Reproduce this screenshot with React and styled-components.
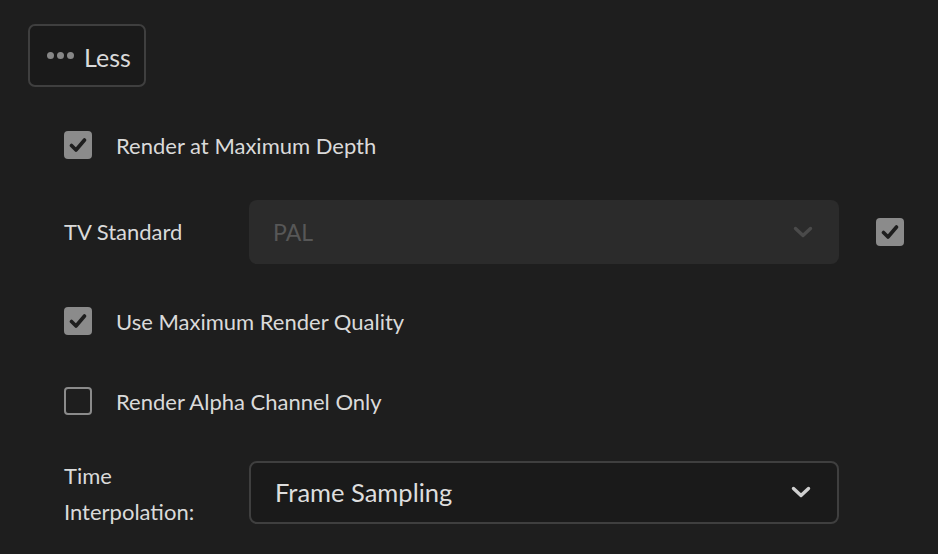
import React from "react";
import styled, { createGlobalStyle } from "styled-components";

const Global = createGlobalStyle`
  html, body { margin: 0; padding: 0; background: #1e1e1e; }
  body { font-family: "Lato", "Liberation Sans", sans-serif; color: #d8d8d8; }
`;

const Page = styled.div`
  width: 938px;
  height: 554px;
  box-sizing: border-box;
  padding: 24px 0 0 28px;
  background: #1e1e1e;
  overflow: hidden;
`;

const LessButton = styled.button`
  display: flex;
  align-items: center;
  gap: 10px;
  box-sizing: border-box;
  width: 118px;
  height: 63px;
  padding: 2px 0 0 17px;
  background: #1a1a1a;
  border: 2px solid #3f3f3f;
  border-radius: 7px;
  font-family: inherit;
  font-size: 25px;
  color: #dadada;
  cursor: pointer;
`;

const Dots = styled.span`
  display: flex;
  gap: 3px;
  margin-top: -2px;
  & > i {
    width: 7px;
    height: 7px;
    border-radius: 50%;
    background: #878787;
  }
`;

const Form = styled.div`
  display: flex;
  flex-direction: column;
  padding-left: 36px;
`;

const Row = styled.div`
  display: flex;
  align-items: center;
  height: 64px;
  margin-top: ${(p) => p.$mt}px;
`;

const Box = styled.span`
  flex: none;
  display: flex;
  align-items: center;
  justify-content: center;
  box-sizing: border-box;
  width: 28px;
  height: 28px;
  border-radius: 4px;
  background: ${(p) => (p.$checked ? "#8b8b8b" : "transparent")};
  border: ${(p) => (p.$checked ? "none" : "2.5px solid #8b8b8b")};
  margin-left: ${(p) => p.$ml || 0}px;
`;

const CheckText = styled.span`
  margin-left: 24px;
  font-size: 22px;
  color: #dadada;
`;

const Label = styled.div`
  width: 185px;
  flex: none;
  font-size: 22px;
  line-height: 36px;
  padding-top: ${(p) => p.$pt || 0}px;
  color: #dadada;
`;

const Select = styled.div`
  display: flex;
  align-items: center;
  justify-content: space-between;
  box-sizing: border-box;
  width: 590px;
  height: ${(p) => (p.$disabled ? 64 : 63)}px;
  padding: 0 26px 0 24px;
  border-radius: 8px;
  background: ${(p) => (p.$disabled ? "#2b2b2b" : "#1a1a1a")};
  border: ${(p) => (p.$disabled ? "none" : "2px solid #3f3f3f")};
  font-size: ${(p) => (p.$disabled ? 23 : 25.5)}px;
  color: ${(p) => (p.$disabled ? "#575757" : "#dedede")};
`;

const Check = () => (
  <svg width="18" height="16" viewBox="0 0 18 16">
    <path d="M2.5 8.5 L7 13 L15.5 3" fill="none" stroke="#1e1e1e" strokeWidth="3.6" strokeLinecap="round" strokeLinejoin="round" />
  </svg>
);

const Chevron = ({ color }) => (
  <svg width="20" height="12" viewBox="0 0 20 12">
    <path d="M2.5 2.5 L10 9.5 L17.5 2.5" fill="none" stroke={color} strokeWidth="3.4" strokeLinecap="round" strokeLinejoin="round" />
  </svg>
);

export default function App() {
  return (
    <Page>
      <Global />
      <LessButton>
        <Dots><i /><i /><i /></Dots>
        Less
      </LessButton>
      <Form>
        <Row $mt={26}>
          <Box $checked><Check /></Box>
          <CheckText>Render at Maximum Depth</CheckText>
        </Row>
        <Row $mt={23}>
          <Label>TV Standard</Label>
          <Select $disabled>
            <span>PAL</span>
            <Chevron color="#4a4a4a" />
          </Select>
          <Box $checked $ml={37}><Check /></Box>
        </Row>
        <Row $mt={25}>
          <Box $checked><Check /></Box>
          <CheckText>Use Maximum Render Quality</CheckText>
        </Row>
        <Row $mt={16}>
          <Box />
          <CheckText>Render Alpha Channel Only</CheckText>
        </Row>
        <Row $mt={27}>
          <Label $pt={3}>Time<br />Interpolation:</Label>
          <Select>
            <span>Frame Sampling</span>
            <Chevron color="#cfcfcf" />
          </Select>
        </Row>
      </Form>
    </Page>
  );
}
